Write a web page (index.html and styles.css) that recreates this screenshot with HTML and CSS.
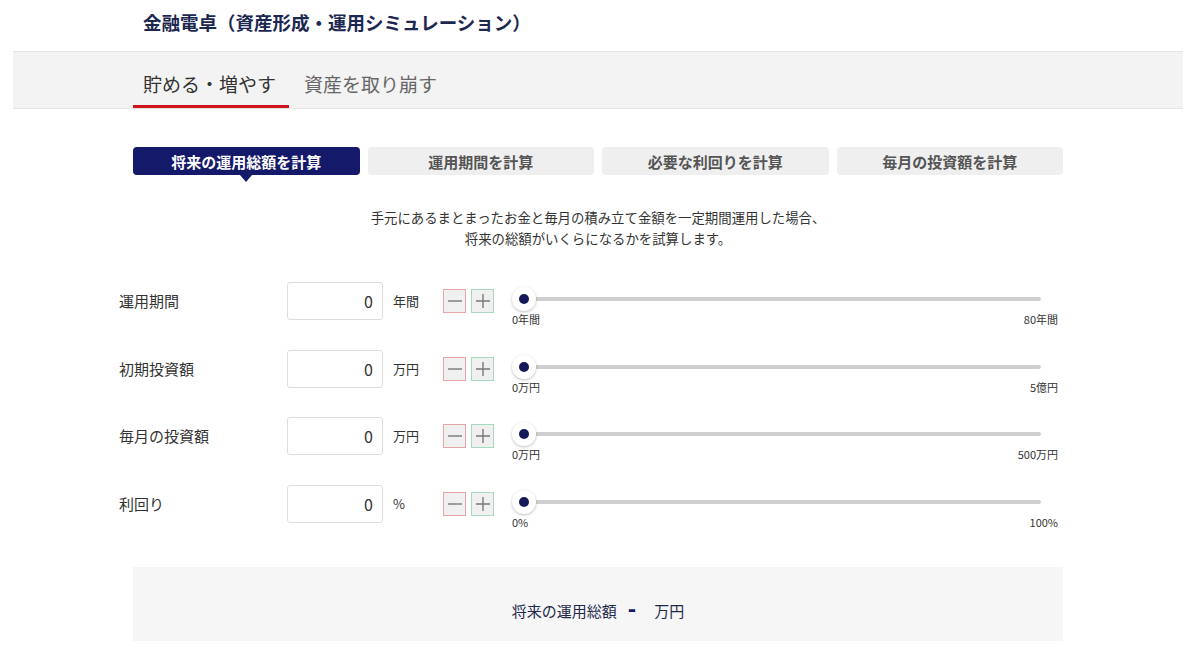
FILE: index.html
```html
<!DOCTYPE html>
<html lang="ja">
<head>
<meta charset="utf-8">
<title>金融電卓</title>
<link rel="stylesheet" href="styles.css">
</head>
<body>
<header class="header">
  <h1 class="title">金融電卓（資産形成・運用シミュレーション）</h1>
</header>
<nav class="tabbar">
  <div class="tab active">貯める・増やす</div>
  <div class="tab">資産を取り崩す</div>
</nav>
<main class="main">
  <div class="subtabs">
    <div class="subtab active">将来の運用総額を計算</div>
    <div class="subtab">運用期間を計算</div>
    <div class="subtab">必要な利回りを計算</div>
    <div class="subtab">毎月の投資額を計算</div>
  </div>
  <p class="desc">手元にあるまとまったお金と毎月の積み立て金額を一定期間運用した場合、<br>将来の総額がいくらになるかを試算します。</p>

  <div class="rows">
    <div class="row">
      <div class="label">運用期間</div>
      <div class="input">0</div>
      <div class="unit">年間</div>
      <div class="btns">
        <span class="btn minus"><svg width="14" height="14" viewBox="0 0 14 14"><path d="M0 7H14" stroke="#777" stroke-width="1.4"/></svg></span>
        <span class="btn plus"><svg width="14" height="14" viewBox="0 0 14 14"><path d="M0 7H14M7 0V14" stroke="#777" stroke-width="1.4"/></svg></span>
      </div>
      <div class="slider">
        <div class="track"><span class="thumb"></span></div>
        <div class="scale"><span>0年間</span><span>80年間</span></div>
      </div>
    </div>
    <div class="row">
      <div class="label">初期投資額</div>
      <div class="input">0</div>
      <div class="unit">万円</div>
      <div class="btns">
        <span class="btn minus"><svg width="14" height="14" viewBox="0 0 14 14"><path d="M0 7H14" stroke="#777" stroke-width="1.4"/></svg></span>
        <span class="btn plus"><svg width="14" height="14" viewBox="0 0 14 14"><path d="M0 7H14M7 0V14" stroke="#777" stroke-width="1.4"/></svg></span>
      </div>
      <div class="slider">
        <div class="track"><span class="thumb"></span></div>
        <div class="scale"><span>0万円</span><span>5億円</span></div>
      </div>
    </div>
    <div class="row">
      <div class="label">毎月の投資額</div>
      <div class="input">0</div>
      <div class="unit">万円</div>
      <div class="btns">
        <span class="btn minus"><svg width="14" height="14" viewBox="0 0 14 14"><path d="M0 7H14" stroke="#777" stroke-width="1.4"/></svg></span>
        <span class="btn plus"><svg width="14" height="14" viewBox="0 0 14 14"><path d="M0 7H14M7 0V14" stroke="#777" stroke-width="1.4"/></svg></span>
      </div>
      <div class="slider">
        <div class="track"><span class="thumb"></span></div>
        <div class="scale"><span>0万円</span><span>500万円</span></div>
      </div>
    </div>
    <div class="row">
      <div class="label">利回り</div>
      <div class="input">0</div>
      <div class="unit">%</div>
      <div class="btns">
        <span class="btn minus"><svg width="14" height="14" viewBox="0 0 14 14"><path d="M0 7H14" stroke="#777" stroke-width="1.4"/></svg></span>
        <span class="btn plus"><svg width="14" height="14" viewBox="0 0 14 14"><path d="M0 7H14M7 0V14" stroke="#777" stroke-width="1.4"/></svg></span>
      </div>
      <div class="slider">
        <div class="track"><span class="thumb"></span></div>
        <div class="scale"><span>0%</span><span>100%</span></div>
      </div>
    </div>
  </div>

  <div class="result">
    <span>将来の運用総額</span><span class="dash">-</span><span>万円</span>
  </div>
</main>
</body>
</html>
```

FILE: styles.css
```css
* { box-sizing: border-box; }
html, body { margin: 0; padding: 0; background: #fff; }
body {
  font-family: "Noto Sans CJK JP", "Noto Sans", "Liberation Sans", sans-serif;
  color: #333;
  width: 1200px;
  height: 660px;
  overflow: hidden;
}
.header {
  height: 51px;
  padding-left: 143px;
  display: flex;
  align-items: center;
}
.title {
  margin: 0;
  font-size: 18.5px;
  font-weight: bold;
  color: #1c2850;
  padding-bottom: 8px;
}
.tabbar {
  margin: 0 17px 0 13px;
  height: 58px;
  background: #f3f3f3;
  border-top: 1px solid #e6e6e6;
  border-bottom: 1px solid #e6e6e6;
  display: flex;
  padding-left: 120px;
  gap: 5px;
}
.tab {
  font-size: 19px;
  color: #666;
  padding: 18px 13px 0 10px;
  height: 56px;
  border-bottom: 3px solid transparent;
}
.tab.active {
  color: #333;
  border-bottom-color: #d0141c;
}
.main {
  width: 930px;
  margin-left: 133px;
}
.subtabs {
  margin-top: 38px;
  display: grid;
  grid-template-columns: repeat(4, 1fr);
  gap: 8px;
}
.subtab {
  height: 28px;
  background: #efefef;
  border-radius: 4px;
  font-size: 15px;
  font-weight: bold;
  color: #555;
  display: flex;
  align-items: center;
  justify-content: center;
  position: relative;
}
.subtab.active {
  background: #14196a;
  color: #fff;
}
.subtab.active::after {
  content: "";
  position: absolute;
  left: 50%;
  bottom: -7px;
  margin-left: -6px;
  border-left: 6px solid transparent;
  border-right: 6px solid transparent;
  border-top: 7px solid #14196a;
}
.desc {
  margin: 32px 0 0;
  text-align: center;
  font-size: 13.4px;
  line-height: 21px;
  color: #333;
}
.rows {
  margin-top: 33px;
  margin-left: -14px;
  display: flex;
  flex-direction: column;
  gap: 29.5px;
}
.row {
  display: flex;
  align-items: flex-start;
  height: 38px;
}
.label {
  width: 168px;
  font-size: 15px;
  line-height: 38px;
  color: #333;
}
.input {
  width: 96px;
  height: 38px;
  border: 1px solid #ddd;
  border-radius: 3px;
  text-align: right;
  padding-right: 9px;
  font-size: 16px;
  line-height: 36px;
  color: #333;
}
.unit {
  width: 60px;
  padding-left: 10px;
  font-size: 13px;
  line-height: 38px;
  color: #333;
}
.btns {
  display: flex;
  gap: 5px;
  margin-top: 7px;
}
.btn {
  width: 23px;
  height: 24px;
  background: #f0f0f0;
  border: 1px solid #e6a6a6;
  display: flex;
  align-items: center;
  justify-content: center;
}
.btn.plus { border-color: #a6d9bd; }
.slider {
  width: 546px;
  margin-left: 18px;
  margin-top: 5px;
}
.track {
  position: relative;
  height: 24px;
  margin: 0 17px 0 12px;
}
.track::before {
  content: "";
  position: absolute;
  left: 0;
  right: 0;
  top: 10px;
  height: 4px;
  border-radius: 2px;
  background: #cfcfcf;
}
.thumb {
  position: absolute;
  left: -12px;
  top: 0;
  width: 24px;
  height: 24px;
  border-radius: 50%;
  background: #fff;
  box-shadow: 0 1px 3px rgba(0,0,0,0.25);
}
.thumb::after {
  content: "";
  position: absolute;
  left: 7px;
  top: 7px;
  width: 10px;
  height: 10px;
  border-radius: 50%;
  background: #14195a;
}
.scale {
  display: flex;
  justify-content: space-between;
  font-size: 11px;
  line-height: 14px;
  color: #333;
  margin-top: 1px;
}
.result {
  margin-top: 44px;
  height: 74px;
  background: #f6f6f7;
  display: flex;
  justify-content: center;
  align-items: center;
  padding-top: 14px;
  font-size: 15px;
  color: #1f2a4a;
}
.dash {
  font-size: 22px;
  font-weight: 900;
  color: #14195a;
  margin: 0 18px 0 11px;
  position: relative;
  top: -4px;
}
```
